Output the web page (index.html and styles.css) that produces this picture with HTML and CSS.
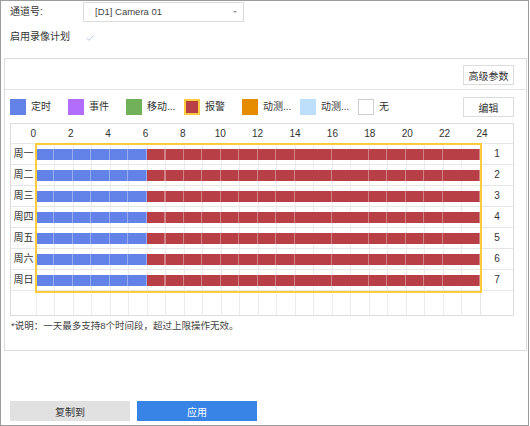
FILE: index.html
```html
<!DOCTYPE html>
<html lang="zh-CN">
<head>
    <meta charset="UTF-8">
    <title>录像计划</title>
    <link rel="stylesheet" href="styles.css">
</head>
<body>
    <div class="frame">
        <div class="form-row">
            <span class="form-label">通道号:</span>
            <div class="select">[D1] Camera 01<span class="caret"></span></div>
        </div>
        <div class="form-row">
            <span class="form-label">启用录像计划</span>
            <svg class="check" width="10" height="10" viewBox="0 0 10 10">
                <path d="M1.8 5.2 L4 7.4 L8.4 2.6" fill="none" stroke="#a7bfe2" stroke-width="0.9"/>
            </svg>
        </div>

        <div class="panel">
            <div class="panel-top">
                <button class="btn">高级参数</button>
            </div>

            <div class="legend-row">
                <div class="legend">
                    <div class="item"><span class="swatch timing"></span><span class="name">定时</span></div>
                    <div class="item"><span class="swatch event"></span><span class="name">事件</span></div>
                    <div class="item"><span class="swatch motion"></span><span class="name">移动...</span></div>
                    <div class="item"><span class="swatch alarm selected"></span><span class="name">报警</span></div>
                    <div class="item"><span class="swatch motion-or"></span><span class="name">动测...</span></div>
                    <div class="item"><span class="swatch motion-and"></span><span class="name">动测...</span></div>
                    <div class="item"><span class="swatch none"></span><span class="name">无</span></div>
                </div>
                <button class="btn">编辑</button>
            </div>

            <div class="schedule">
                <div class="head">
                    <span>0</span><span>2</span><span>4</span><span>6</span><span>8</span><span>10</span><span>12</span>
                    <span>14</span><span>16</span><span>18</span><span>20</span><span>22</span><span>24</span>
                </div>
                <div class="row">
                    <span class="day">周一</span>
                    <div class="hours"><div class="bar"><span class="seg timing" style="width: 25%"></span><span class="seg alarm" style="width: 75%"></span></div></div>
                    <span class="num">1</span>
                </div>
                <div class="row">
                    <span class="day">周二</span>
                    <div class="hours"><div class="bar"><span class="seg timing" style="width: 25%"></span><span class="seg alarm" style="width: 75%"></span></div></div>
                    <span class="num">2</span>
                </div>
                <div class="row">
                    <span class="day">周三</span>
                    <div class="hours"><div class="bar"><span class="seg timing" style="width: 25%"></span><span class="seg alarm" style="width: 75%"></span></div></div>
                    <span class="num">3</span>
                </div>
                <div class="row">
                    <span class="day">周四</span>
                    <div class="hours"><div class="bar"><span class="seg timing" style="width: 25%"></span><span class="seg alarm" style="width: 75%"></span></div></div>
                    <span class="num">4</span>
                </div>
                <div class="row">
                    <span class="day">周五</span>
                    <div class="hours"><div class="bar"><span class="seg timing" style="width: 25%"></span><span class="seg alarm" style="width: 75%"></span></div></div>
                    <span class="num">5</span>
                </div>
                <div class="row">
                    <span class="day">周六</span>
                    <div class="hours"><div class="bar"><span class="seg timing" style="width: 25%"></span><span class="seg alarm" style="width: 75%"></span></div></div>
                    <span class="num">6</span>
                </div>
                <div class="row">
                    <span class="day">周日</span>
                    <div class="hours"><div class="bar"><span class="seg timing" style="width: 25%"></span><span class="seg alarm" style="width: 75%"></span></div></div>
                    <span class="num">7</span>
                </div>
                <div class="row empty">
                    <span class="day"></span>
                    <div class="hours"></div>
                    <span class="num"></span>
                </div>

                <!-- 选中区域 -->
                <div class="selection"></div>
            </div>

            <p class="note">*说明：一天最多支持8个时间段，超过上限操作无效。</p>
        </div>

        <div class="actions">
            <button class="btn-copy">复制到</button>
            <button class="btn-apply">应用</button>
        </div>
    </div>
</body>
</html>
```

FILE: styles.css
```css
* {
    margin: 0;
    padding: 0;
    box-sizing: border-box;
}

body {
    font-family: "Liberation Sans", "Noto Sans CJK SC", sans-serif;
    font-size: 10px;
    color: #333;
    background: #fff;
}

.frame {
    width: 529px;
    height: 426px;
    border: 1px solid #9c9c9c;
}

/* 顶部表单 */
.form-row {
    display: flex;
    align-items: center;
    height: 20px;
}

.form-row:first-child {
    margin-top: 1px;
}

.form-row + .form-row {
    margin-top: 5px;
}

.form-label {
    width: 82px;
    padding-left: 9px;
    line-height: 20px;
}

.select {
    position: relative;
    width: 161px;
    height: 20px;
    border: 1px solid #dcdcdc;
    padding-left: 11px;
    line-height: 18px;
    font-size: 9.5px;
    color: #444;
}

.caret {
    position: absolute;
    right: 6px;
    top: 8px;
    border-left: 2px solid transparent;
    border-right: 2px solid transparent;
    border-top: 2px solid #999;
}

.check {
    margin-left: 2px;
    margin-top: 1px;
}

/* 面板 */
.panel {
    margin: 11px 1px 0 3px;
    height: 293px;
    border: 1px solid #dcdcdc;
}

.panel-top {
    height: 31px;
    display: flex;
    justify-content: flex-end;
    padding: 6px 12px 0 0;
    border-bottom: 1px solid #e3e3e3;
}

.btn {
    width: 51px;
    height: 20px;
    background: #fff;
    border: 1px solid #dcdcdc;
    font-family: inherit;
    font-size: 10px;
    color: #333;
}

.legend-row {
    display: flex;
    justify-content: space-between;
    padding: 7px 12px 0 5px;
}

.legend {
    display: flex;
    align-items: center;
}

.item {
    width: 58px;
    display: flex;
    align-items: center;
}

.swatch {
    width: 16px;
    height: 16px;
    flex-shrink: 0;
}

.swatch.timing { background: #6282e8; }
.swatch.event { background: #b36dfd; }
.swatch.motion { background: #70b159; }
.swatch.alarm { background: #b83f45; }
.swatch.motion-or { background: #e68a00; }
.swatch.motion-and { background: #bddffb; }
.swatch.none { background: #fff; border: 1px solid #cfcfcf; }

.swatch.selected {
    border: 2px solid #fdcb3b;
}

.name {
    margin-left: 5px;
    white-space: nowrap;
    line-height: 14px;
}

/* 时间表 */
.schedule {
    position: relative;
    margin: 6px 12px 0 5px;
    border: 1px solid #dcdcdc;
}

.head {
    display: flex;
    align-items: center;
    height: 20px;
    padding-left: 3.6px;
    border-bottom: 1px solid #e6e6e6;
}

.head span {
    width: 37.4px;
    flex-shrink: 0;
    text-align: center;
}

.row {
    display: flex;
    height: 21px;
    border-bottom: 1px solid #e6e6e6;
}

.row.empty {
    height: 24px;
    border-bottom: none;
}

.day {
    width: 25px;
    text-align: center;
    line-height: 20px;
}

.hours {
    width: 444px;
    background: repeating-linear-gradient(90deg, #ececec 0 1px, transparent 1px 18.5px);
}

.bar {
    display: flex;
    height: 11px;
    margin-top: 5px;
}

.seg {
    height: 100%;
    background-image: repeating-linear-gradient(90deg, transparent 0 17.5px, rgba(255, 255, 255, 0.35) 17.5px 18.5px);
}

.seg.timing { background-color: #6282e8; }
.seg.alarm { background-color: #b83f45; }

.num {
    flex: 1;
    text-align: center;
    line-height: 20px;
    border-left: 1px solid #e6e6e6;
}

.selection {
    position: absolute;
    left: 24px;
    top: 19px;
    width: 447px;
    height: 150px;
    border: 2px solid #fdcb3b;
}

.note {
    margin: 4px 0 0 6px;
    font-size: 9.5px;
    line-height: 12px;
    color: #444;
}

/* 底部按钮 */
.actions {
    display: flex;
    gap: 7px;
    margin-top: 50px;
    padding-left: 9px;
}

.actions button {
    width: 120px;
    height: 20px;
    border: none;
    font-family: inherit;
    font-size: 10px;
}

.btn-copy {
    background: #e1e1e1;
    color: #333;
}

.btn-apply {
    background: #3783e6;
    color: #fff;
}
```
